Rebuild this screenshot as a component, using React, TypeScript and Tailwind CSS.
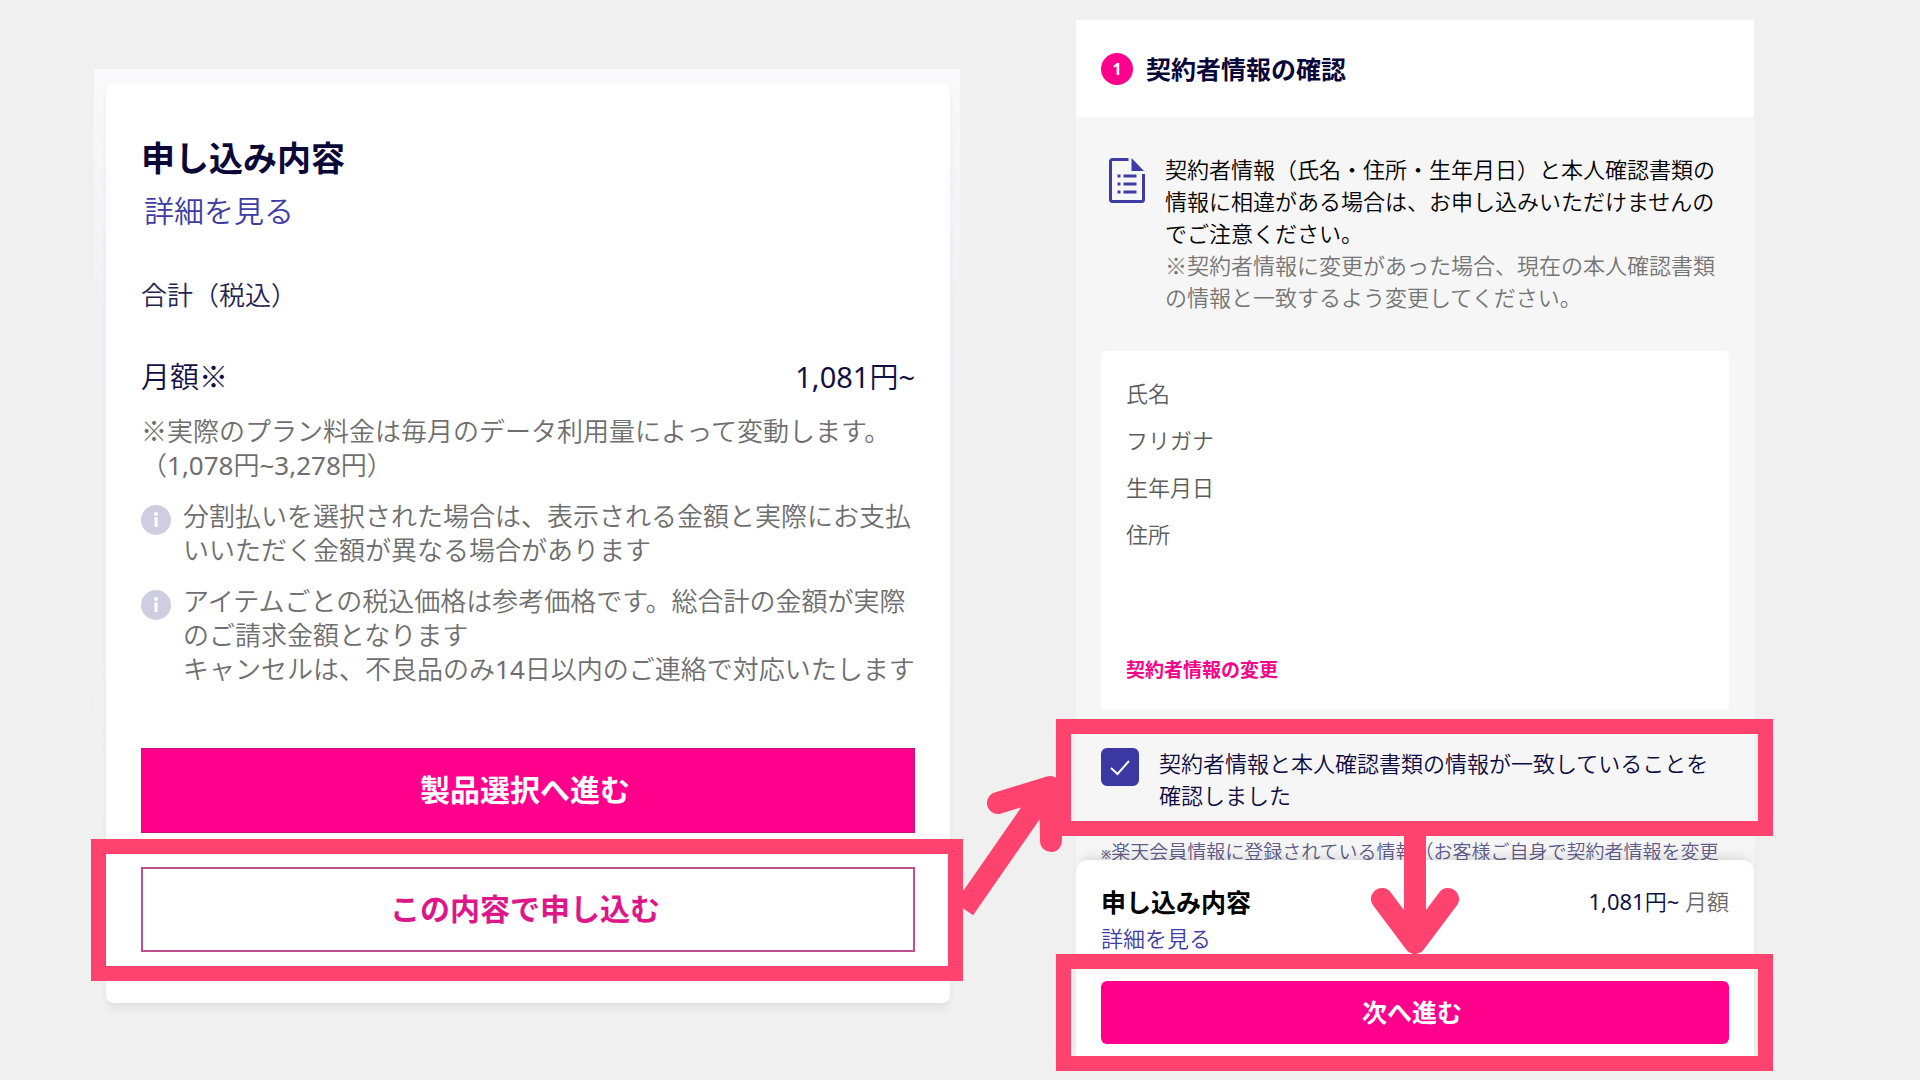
import { useState } from 'react';

const infoNotes = [
  ['分割払いを選択された場合は、表示される金額と実際にお支払', 'いいただく金額が異なる場合があります'],
  [
    'アイテムごとの税込価格は参考価格です。総合計の金額が実際',
    'のご請求金額となります',
    'キャンセルは、不良品のみ14日以内のご連絡で対応いたします',
  ],
];

const contractFields = ['氏名', 'フリガナ', '生年月日', '住所'];

// Full-width reference mark, Noto Sans has a narrower one
function Kome() {
  return <span className="font-['Noto_Sans_CJK_JP',sans-serif] leading-none">※</span>;
}

// Digits keep the regular weight inside the lighter Japanese text
function Lines({ lines }: { lines: string[] }) {
  return (
    <>
      {lines.map(line => (
        <span key={line} className="block whitespace-nowrap">
          {line.split(/([\d,~]+)/).map((part, i) =>
            i % 2 ? (
              <span key={i} className="font-normal">
                {part}
              </span>
            ) : (
              part
            )
          )}
        </span>
      ))}
    </>
  );
}

function InfoIcon() {
  return (
    <svg viewBox="0 0 30 30" className="w-[30px] h-[30px] mt-[6px] shrink-0" aria-hidden="true">
      <circle cx="15" cy="15" r="15" fill="#cfcde0" />
      <circle cx="15" cy="9" r="2" fill="#fff" />
      <path d="M13 12.5h3.6V22h-3V14.5H13z" fill="#fff" />
    </svg>
  );
}

function DocumentIcon() {
  return (
    <svg viewBox="0 0 36 45" className="w-9 h-[45px] shrink-0" aria-hidden="true">
      <path
        d="M19.5 1.5H3.5a2 2 0 0 0-2 2v38a2 2 0 0 0 2 2h29a2 2 0 0 0 2-2V16"
        fill="none"
        stroke="#3f3da3"
        strokeWidth="3"
      />
      <path d="M22.5 0 35 13H22.5z" fill="#3f3da3" />
      <path
        d="M8.5 18h3M14.5 18h13M8.5 26h3M14.5 26h13M8.5 34h3M14.5 34h13"
        stroke="#3f3da3"
        strokeWidth="3"
      />
    </svg>
  );
}

function OrderCard() {
  return (
    <section className="pl-3 pr-[10px] pt-[14px] pb-[7px] mt-[69px] bg-linear-to-b from-[#f9f8fb] via-[#f2f0f4] via-25% to-[#f0f0f0]">
      <div className="bg-white rounded-lg px-[35px] pt-[50px] pb-[51px] shadow-[0_7px_8px_-2px_rgba(0,0,0,0.07)]">
        <h2 className="text-[34px] leading-[50px] font-bold text-[#0b0838]">申し込み内容</h2>
        <a href="#detail" className="block mt-2 pl-[3px] text-[30px] leading-10 font-[350] text-[#3f3da3]">
          詳細を見る
        </a>
        <p className="mt-[46px] text-[26px] leading-9 font-[350] text-[#26244f]">合計（税込）</p>
        <div className="flex justify-between mt-11 text-[29px] leading-10 text-[#120f45]">
          <span className="font-[350]">
            月額
            <Kome />
          </span>
          <span>
            1,081<span className="font-[350]">円</span>~
          </span>
        </div>
        <div className="mt-[17px] text-[26px] leading-[34px] font-[350] text-[#6e6e6e]">
          <p className="whitespace-nowrap">
            <Kome />
            実際のプラン料金は毎月のデータ利用量によって変動します。
          </p>
          <p>
            <Lines lines={['（1,078円~3,278円）']} />
          </p>
          {infoNotes.map(lines => (
            <div key={lines[0]} className="flex gap-3 mt-[17px]">
              <InfoIcon />
              <p>
                <Lines lines={lines} />
              </p>
            </div>
          ))}
        </div>
        <button className="block w-full h-[85px] mt-[62px] pr-[6px] pb-[3px] bg-[#ff008c] border border-[#c4147c] text-white text-[30px] font-bold">
          製品選択へ進む
        </button>
        <div className="relative mt-[34px]">
          <button className="block w-full h-[85px] pr-[6px] pb-[3px] bg-white border-2 border-[#c04f8d] text-[#dd1788] text-[30px] font-bold">
            この内容で申し込む
          </button>
          <div className="absolute -left-[50px] -right-12 -top-7 -bottom-[29px] border-[15px] border-[#ff436f] pointer-events-none" />
        </div>
      </div>
    </section>
  );
}

function ConfirmCheck() {
  const [confirmed, setConfirmed] = useState(true);

  return (
    <div className="relative z-20 mt-[9px] pt-7 pb-[25px] px-[25px]">
      <label className="flex gap-5 text-[22px] leading-8 font-[350] text-[#0d0a42]">
        <span className="relative shrink-0 w-[38px] h-[38px] mt-px">
          <input
            type="checkbox"
            checked={confirmed}
            onChange={e => setConfirmed(e.target.checked)}
            className="block w-[38px] h-[38px] appearance-none rounded-md border-2 border-[#3b38a3] checked:bg-[#3b38a3]"
          />
          {confirmed && (
            <svg viewBox="0 0 38 38" className="absolute inset-0 pointer-events-none" aria-hidden="true">
              <path d="M10 20l6.5 6L28 13" fill="none" stroke="#fff" strokeWidth="2" />
            </svg>
          )}
        </span>
        <span>
          <Lines lines={['契約者情報と本人確認書類の情報が一致していることを', '確認しました']} />
        </span>
      </label>
      <div className="absolute -left-5 -right-[19px] inset-y-0 border-[15px] border-[#ff436f] pointer-events-none" />

      {/* Arrow coming from the order card */}
      <svg
        viewBox="0 0 110 160"
        className="absolute -left-[121px] top-[41px] w-[110px] h-40 pointer-events-none"
        fill="none"
        stroke="#ff436f"
        strokeWidth="22"
        aria-hidden="true"
      >
        <path d="M9 149 93 28" />
        <path d="M43 43 95 27 96 81" strokeLinecap="round" strokeLinejoin="round" />
      </svg>

      {/* Arrow down to the submit button */}
      <svg
        viewBox="0 0 88 130"
        className="absolute left-1/2 -ml-11 top-[105px] w-[88px] h-[130px] pointer-events-none"
        fill="none"
        stroke="#ff436f"
        strokeWidth="22"
        aria-hidden="true"
      >
        <path d="M44 0V118" />
        <path d="M11 75 44 119 77 75" strokeLinecap="round" strokeLinejoin="round" />
      </svg>
    </div>
  );
}

function BottomSheet() {
  return (
    <div className="relative z-10 -mt-[6px] bg-white rounded-t-xl shadow-[0_-8px_12px_-6px_rgba(0,0,0,0.14)]">
      <div className="flex justify-between px-[25px] pt-6">
        <div>
          <h2 className="text-[25px] leading-9 font-bold text-black">申し込み内容</h2>
          <a href="#detail" className="block mt-[2px] text-[22px] leading-8 font-[350] text-[#3f3da3]">
            詳細を見る
          </a>
        </div>
        <p className="text-[22px] leading-[34px] text-[#120f45]">
          1,081<span className="font-[350]">円</span>~ <span className="font-[350] text-[#6b6b6b]">月額</span>
        </p>
      </div>
      <div className="relative px-[25px] py-[27px]">
        <button className="block w-full h-[63px] pr-[6px] bg-[#ff008c] rounded-md text-white text-[25px] font-bold">
          次へ進む
        </button>
        <div className="absolute -left-5 -right-[19px] inset-y-0 border-[15px] border-[#ff436f] pointer-events-none" />
      </div>
    </div>
  );
}

function ConfirmPanel() {
  return (
    <section className="mt-5 bg-[#f6f6f6]">
      <header className="flex items-center gap-[13px] h-[97px] px-[25px] bg-white">
        <span className="flex items-center justify-center w-8 h-8 rounded-full bg-[#ff008c] text-white text-base font-bold">
          1
        </span>
        <h2 className="text-[25px] leading-9 font-bold text-[#0a0638]">契約者情報の確認</h2>
      </header>

      <div className="px-[25px] pt-9">
        <div className="flex gap-5 pl-2 text-[22px] leading-8 font-[350]">
          <div className="pt-[5px]">
            <DocumentIcon />
          </div>
          <div>
            <p className="text-black">
              <Lines
                lines={[
                  '契約者情報（氏名・住所・生年月日）と本人確認書類の',
                  '情報に相違がある場合は、お申し込みいただけませんの',
                  'でご注意ください。',
                ]}
              />
            </p>
            <p className="text-[#757575] whitespace-nowrap">
              <Kome />
              契約者情報に変更があった場合、現在の本人確認書類
              <br />
              の情報と一致するよう変更してください。
            </p>
          </div>
        </div>

        <div className="mt-[38px] px-[25px] pt-[26px] pb-[25px] bg-white rounded-md">
          <ul className="flex flex-col gap-[15px] text-[22px] leading-8 font-[350] text-[#5c5c5c]">
            {contractFields.map(field => (
              <li key={field}>{field}</li>
            ))}
          </ul>
          <a href="#change" className="block mt-[105px] text-[19px] leading-[30px] font-bold text-[#f5058a]">
            契約者情報の変更
          </a>
        </div>
      </div>

      <ConfirmCheck />

      <p className="mt-[2px] px-[25px] text-[19px] leading-7 font-[350] text-[#5f5c8a] whitespace-nowrap">
        <span className="text-xs font-semibold">※</span>
        楽天会員情報に登録されている情報（お客様ご自身で契約者情報を変更
      </p>

      <BottomSheet />
    </section>
  );
}

export default function App() {
  return (
    <main
      lang="ja"
      className="grid grid-cols-[866fr_678fr] items-start gap-[116px] min-h-screen pl-[94px] pr-[166px] bg-[#f0f0f0] font-['Noto_Sans','Noto_Sans_CJK_JP',sans-serif]"
    >
      <OrderCard />
      <ConfirmPanel />
    </main>
  );
}
